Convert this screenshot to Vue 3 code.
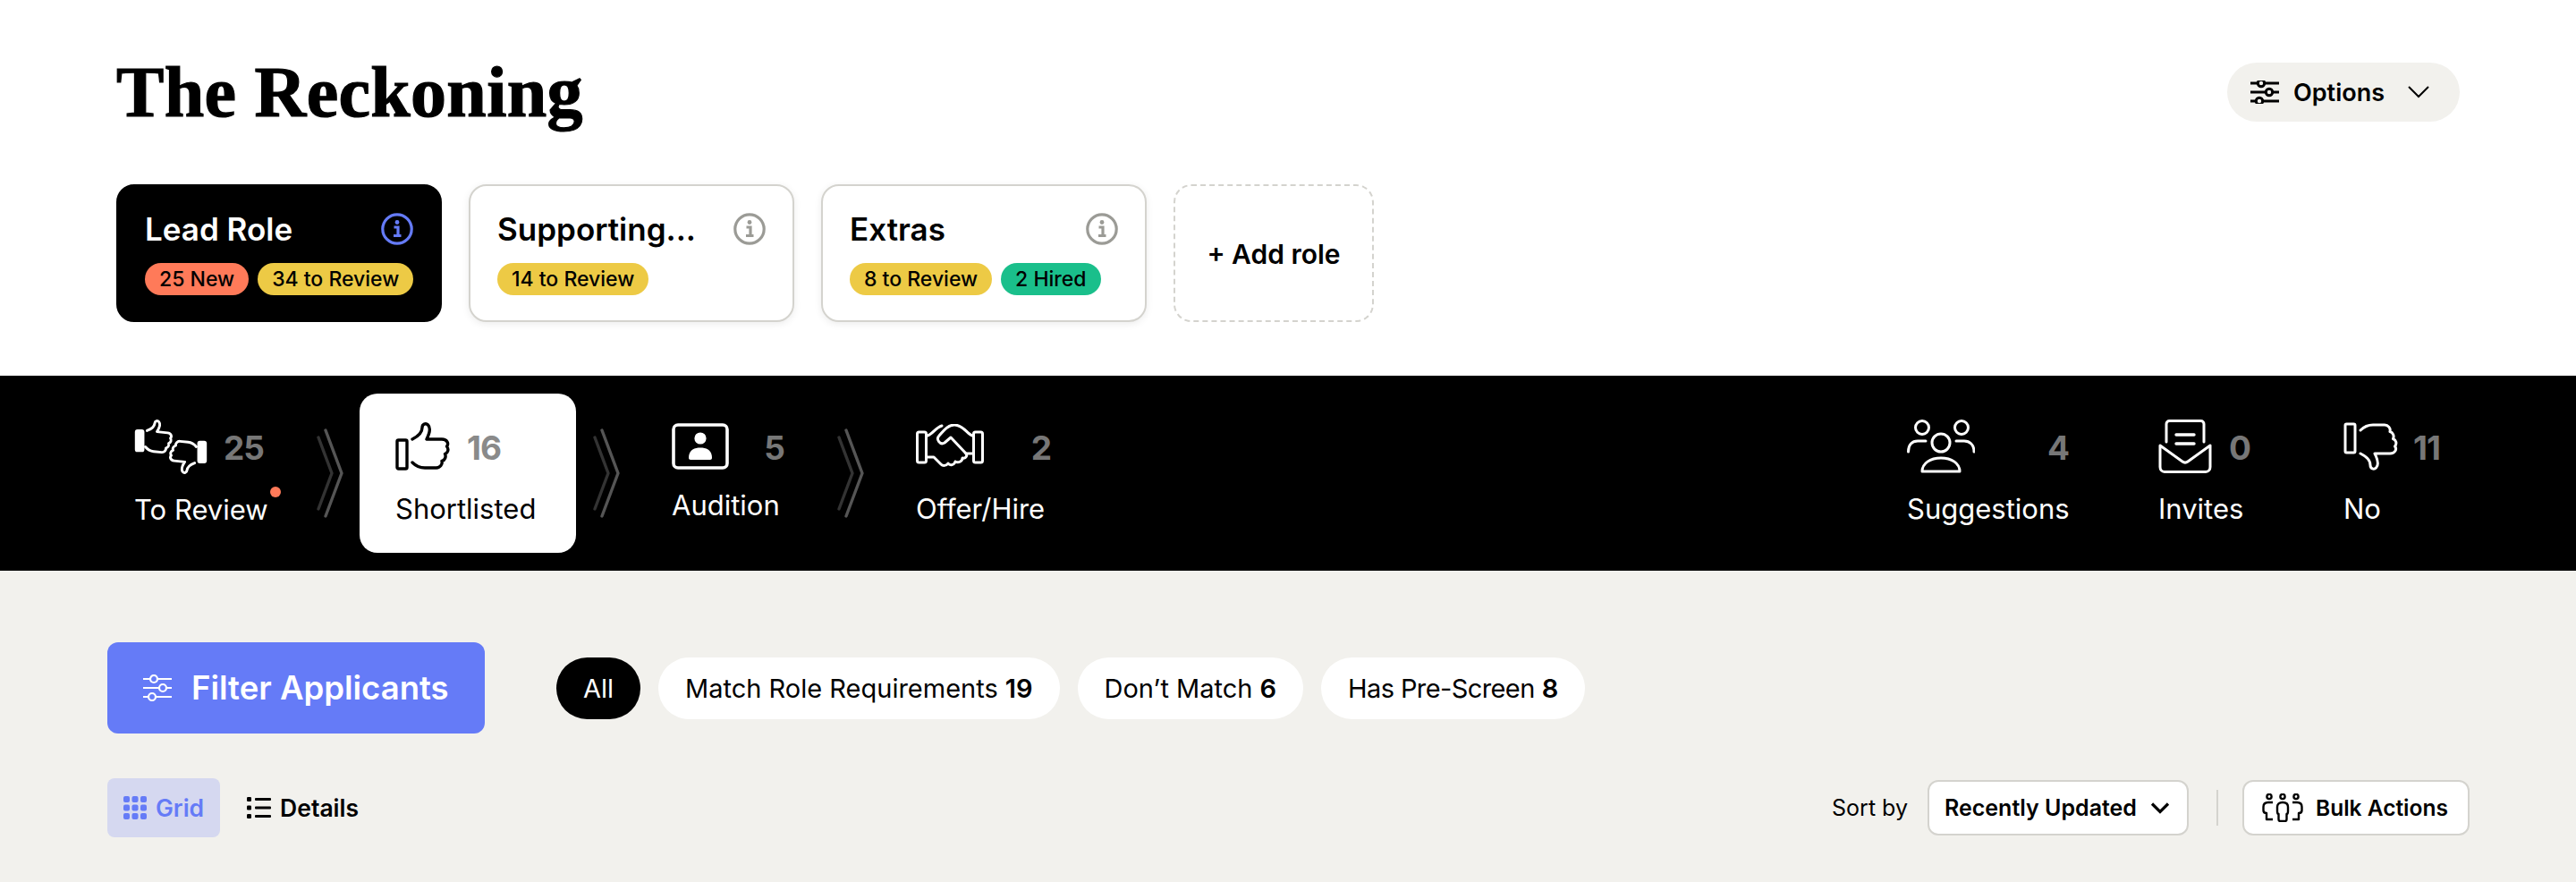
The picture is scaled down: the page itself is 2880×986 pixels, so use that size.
<script setup>
import { ref } from 'vue';

const thumb = 'M19 19 C25 16 30 11 30 6 C30 2 34 0.5 36.5 3 C39.5 6 38 13 35 19 L52 19 C58 19 60 24 57.5 27 C60 30 59 34 55.5 35.5 C57 38.5 55.5 42.5 52 43.5 C53 47 50 51 46 51 L33 51 C27 51 23 49 19 45';

const roles = [
  { name: 'Lead Role', dark: true, tags: [{ text: '25 New', color: 'orange' }, { text: '34 to Review', color: 'yellow' }] },
  { name: 'Supporting...', tags: [{ text: '14 to Review', color: 'yellow' }] },
  { name: 'Extras', tags: [{ text: '8 to Review', color: 'yellow' }, { text: '2 Hired', color: 'green' }] }
];

const pipeline = [
  { label: 'To Review', count: 25, icon: 'review', width: 145, dot: true },
  { label: 'Shortlisted', count: 16, icon: 'up', width: 162, active: true },
  { label: 'Audition', count: 5, icon: 'audition', width: 126 },
  { label: 'Offer/Hire', count: 2, icon: 'hire', width: 151 }
];

const others = [
  { label: 'Suggestions', count: 4, icon: 'people', width: 181 },
  { label: 'Invites', count: 0, icon: 'invite', width: 103 },
  { label: 'No', count: 11, icon: 'down', width: 108 }
];

const chips = [
  { label: 'Match Role Requirements', count: 19 },
  { label: 'Don’t Match', count: 6 },
  { label: 'Has Pre-Screen', count: 8 }
];

const view = ref('grid');
</script>

<template>
  <div class="page">
    <header class="top">
      <div class="title-row">
        <h1>The Reckoning</h1>
        <button class="options">
          <svg class="sliders" width="32" height="26" viewBox="0 0 32 26" fill="none" stroke="currentColor" stroke-width="3">
            <path d="M0 3H8M16 3H32M0 13H17M25 13H32M0 23H6M14 23H32" />
            <circle cx="12" cy="3" r="3.7" /><circle cx="21" cy="13" r="3.7" /><circle cx="10" cy="23" r="3.7" />
          </svg>
          <span>Options</span>
          <svg class="caret" width="24" height="14" viewBox="0 0 24 14" fill="none" stroke="currentColor" stroke-width="2"><path d="M1 1L12 12L23 1" /></svg>
        </button>
      </div>
      <div class="roles">
        <div v-for="r in roles" :key="r.name" class="role" :class="{ dark: r.dark }">
          <div class="role-head">
            <span class="role-name">{{ r.name }}</span>
            <svg class="info" width="36" height="36" viewBox="0 0 36 36" fill="none">
              <circle cx="18" cy="18" r="16.2" stroke="currentColor" stroke-width="3.2" />
              <circle cx="18" cy="10.5" r="2.4" fill="currentColor" />
              <path d="M14.5 16H19V25M14 25.5H22.5" stroke="currentColor" stroke-width="3.2" />
            </svg>
          </div>
          <div class="tags">
            <span v-for="t in r.tags" :key="t.text" class="tag" :class="t.color">{{ t.text }}</span>
          </div>
        </div>
        <div class="add-role">+ Add role</div>
      </div>
    </header>

    <nav class="band">
      <div class="group">
        <template v-for="(s, i) in pipeline" :key="s.label">
          <div class="stage" :class="[s.icon, { active: s.active }]" :style="{ width: s.width + 'px' }">
            <div class="stage-top">
              <svg v-if="s.icon === 'review'" width="82" height="62" viewBox="0 0 82 64" fill="none" stroke="currentColor" stroke-width="3" stroke-linejoin="round" stroke-linecap="round">
                <rect x="1" y="14" width="8" height="23" rx="1.5" fill="currentColor" />
                <g transform="translate(-1 1) scale(.72) rotate(6 30 30)"><path :d="thumb" stroke-width="4.2" /></g>
                <rect x="73" y="27" width="8" height="23" rx="1.5" fill="currentColor" />
                <g transform="translate(83 64) scale(-.72) rotate(6 30 30)"><path :d="thumb" stroke-width="4.2" /></g>
              </svg>
              <svg v-else-if="s.icon === 'up'" width="62" height="56" viewBox="0 0 62 54" fill="none" stroke="currentColor" stroke-width="3.4" stroke-linejoin="round" stroke-linecap="round">
                <rect x="2" y="20" width="11" height="32" rx="1.5" />
                <path :d="thumb" />
              </svg>
              <svg v-else-if="s.icon === 'audition'" width="64" height="52" viewBox="0 0 64 52" fill="none">
                <rect x="2" y="2" width="60" height="48" rx="5" stroke="currentColor" stroke-width="3.6" />
                <circle cx="32" cy="17" r="6.6" fill="currentColor" />
                <path d="M19 39C19 30 25 27.5 32 27.5C39 27.5 45 30 45 39C45 40 44 41 43 41H21C20 41 19 40 19 39Z" fill="currentColor" />
              </svg>
              <svg v-else width="76" height="50" viewBox="0 0 76 50" fill="none" stroke="currentColor" stroke-width="3" stroke-linejoin="round" stroke-linecap="round">
                <rect x="1.5" y="9" width="10" height="34" rx="2" />
                <rect x="64.5" y="9" width="10" height="34" rx="2" />
                <path d="M13 13C19 11 22 4 29 2" />
                <path d="M63 13C57 11 53 1 43 1C37 1 33 5 26 13C22 17 27 24 32 21L39 15L56 33H64" />
                <path d="M12 37H20L28 45C30 47 34 47 36 44C38 47 43 46 44 42C47 44 52 42 52 38C55 39 58 36 56 33" />
              </svg>
              <span class="count">{{ s.count }}</span>
            </div>
            <div class="stage-label">{{ s.label }}<i v-if="s.dot" class="dot"></i></div>
          </div>
          <svg v-if="i < pipeline.length - 1" class="chevrons" width="30" height="100" viewBox="0 0 30 100" fill="none" stroke-width="3.4" stroke-linecap="round" stroke-linejoin="round">
            <path d="M2 10L17 50L2 90" stroke="#333" />
            <path d="M10 2L28 50L10 98" stroke="#555" />
          </svg>
        </template>
      </div>
      <div class="group others">
        <div v-for="s in others" :key="s.label" class="stage" :style="{ width: s.width + 'px' }">
          <div class="stage-top">
            <svg v-if="s.icon === 'people'" width="76" height="60" viewBox="0 0 76 60" fill="none" stroke="currentColor" stroke-width="3" stroke-linecap="round" stroke-linejoin="round">
              <circle cx="17" cy="9" r="7.5" /><circle cx="61" cy="9" r="7.5" /><circle cx="38" cy="26" r="10" />
              <path d="M1.5 36C1.5 28 6 24 12 24H21M75 36C75 28 70 24 64 24H55" />
              <path d="M17 58C17 49 26 43 38 43C50 43 59 49 59 58Z" />
            </svg>
            <svg v-else-if="s.icon === 'invite'" width="60" height="60" viewBox="0 0 60 60" fill="none" stroke="currentColor" stroke-width="3" stroke-linejoin="round" stroke-linecap="round">
              <path d="M9 25V5C9 3 10.5 1.5 12.5 1.5H47.5C49.5 1.5 51 3 51 5V25" />
              <path d="M20 17H40M20 27H40" stroke-width="3.4" />
              <path d="M2 29L27 47C29 48.5 31 48.5 33 47L58 29V53C58 56 56 58.5 53 58.5H7C4 58.5 2 56 2 53Z" />
            </svg>
            <svg v-else width="62" height="56" viewBox="0 0 62 54" fill="none" stroke="currentColor" stroke-width="3" stroke-linejoin="round" stroke-linecap="round">
              <g transform="matrix(1 0 0 -1 0 54)">
                <rect x="2" y="20" width="11" height="32" rx="1.5" />
                <path :d="thumb" />
              </g>
            </svg>
            <span class="count">{{ s.count }}</span>
          </div>
          <div class="stage-label">{{ s.label }}</div>
        </div>
      </div>
    </nav>

    <section class="filters">
      <div class="filter-row">
        <button class="filter-btn">
          <svg width="32" height="30" viewBox="0 0 32 30" fill="none" stroke="currentColor" stroke-width="2.2">
            <path d="M0 5H8M16 5H32M0 15H18M26 15H32M0 25H6M14 25H32" />
            <circle cx="12" cy="5" r="4" /><circle cx="22" cy="15" r="4" /><circle cx="10" cy="25" r="4" />
          </svg>
          Filter Applicants
        </button>
        <div class="chips">
          <span class="chip on">All</span>
          <span v-for="c in chips" :key="c.label" class="chip">{{ c.label }} <b>{{ c.count }}</b></span>
        </div>
      </div>
      <div class="tool-row">
        <div class="views">
          <button class="view" :class="{ on: view === 'grid' }" @click="view = 'grid'">
            <svg width="26" height="26" viewBox="0 0 26 26" fill="currentColor">
              <rect x="0" y="0" width="7" height="7" rx="2" /><rect x="9.5" y="0" width="7" height="7" rx="2" /><rect x="19" y="0" width="7" height="7" rx="2" />
              <rect x="0" y="9.5" width="7" height="7" rx="2" /><rect x="9.5" y="9.5" width="7" height="7" rx="2" /><rect x="19" y="9.5" width="7" height="7" rx="2" />
              <rect x="0" y="19" width="7" height="7" rx="2" /><rect x="9.5" y="19" width="7" height="7" rx="2" /><rect x="19" y="19" width="7" height="7" rx="2" />
            </svg>
            Grid
          </button>
          <button class="view" :class="{ on: view === 'details' }" @click="view = 'details'">
            <svg width="27" height="24" viewBox="0 0 27 24" fill="currentColor">
              <rect x="0" y="0" width="5" height="5" rx="1.2" /><rect x="0" y="9.5" width="5" height="5" rx="1.2" /><rect x="0" y="19" width="5" height="5" rx="1.2" />
              <rect x="9" y="1" width="18" height="3" rx="1" /><rect x="9" y="10.5" width="18" height="3" rx="1" /><rect x="9" y="20" width="18" height="3" rx="1" />
            </svg>
            Details
          </button>
        </div>
        <div class="tools">
          <span class="sort-label">Sort by</span>
          <button class="box select">
            Recently Updated
            <svg width="22" height="13" viewBox="0 0 22 13" fill="none" stroke="currentColor" stroke-width="3.2"><path d="M2 1.5L11 10.5L20 1.5" /></svg>
          </button>
          <span class="divider"></span>
          <button class="box bulk">
            <svg width="46" height="32" viewBox="0 0 46 32" fill="none" stroke="currentColor" stroke-width="2.4" stroke-linejoin="round">
              <circle cx="8" cy="3.5" r="2.6" /><circle cx="23" cy="3.5" r="2.6" /><circle cx="38" cy="3.5" r="2.6" />
              <path d="M12 10H7C3.5 10 1.5 12 1.5 15V19C1.5 21 3 22 5 22V29H12" />
              <path d="M34 10H39C42.5 10 44.5 12 44.5 15V19C44.5 21 43 22 41 22V29H34" />
              <path d="M17 15C17 12 19 10 23 10C27 10 29 12 29 15V20C29 22 28 23 27.5 23V29C27.5 30 26.5 31 25.5 31H20.5C19.5 31 18.5 30 18.5 29V23C18 23 17 22 17 20Z" />
            </svg>
            Bulk Actions
          </button>
        </div>
      </div>
    </section>
  </div>
</template>

<style>
body {
  background: #f2f1ed;
}
</style>

<style scoped>
.page {
  height: 986px;
  display: flex;
  flex-direction: column;
  overflow: hidden;
  font-family: Inter, "Liberation Sans", sans-serif;
  color: #000;
}

button {
  font: inherit;
  color: inherit;
  border: 0;
  background: none;
  cursor: pointer;
}

.top {
  height: 420px;
  box-sizing: border-box;
  padding: 70px 130px 0;
  background: #fff;
}

.title-row {
  height: 66px;
  display: flex;
  justify-content: space-between;
  align-items: center;
}

h1 {
  margin: 0;
  font-family: "Liberation Serif", serif;
  font-size: 80px;
  font-weight: 700;
  line-height: 66px;
  letter-spacing: 0.3px;
  -webkit-text-stroke: 1.2px #000;
}

.options {
  width: 260px;
  height: 66px;
  padding: 0 34px 0 26px;
  display: flex;
  align-items: center;
  border-radius: 33px;
  background: #f2f1ed;
  font-size: 27px;
  font-weight: 600;
}

.sliders {
  margin-right: 16px;
}

.caret {
  margin-left: auto;
}

.roles {
  margin-top: 70px;
  display: flex;
  gap: 30px;
}

.role {
  width: 364px;
  height: 154px;
  box-sizing: border-box;
  padding: 26px 30px 0;
  border: 2px solid #d4d3ce;
  border-radius: 20px;
  background: #fff;
  box-shadow: 0 2px 8px rgba(0, 0, 0, 0.08);
}

.role.dark {
  border-color: #000;
  background: #000;
  color: #fff;
  box-shadow: none;
}

.role-head {
  height: 44px;
  display: flex;
  justify-content: space-between;
  align-items: center;
}

.role-name {
  font-size: 35px;
  font-weight: 600;
}

.info {
  color: #9b9b96;
}

.dark .info {
  color: #657bf7;
}

.tags {
  margin-top: 16px;
  display: flex;
  gap: 10px;
}

.tag {
  height: 36px;
  padding: 0 16px;
  display: flex;
  align-items: center;
  border-radius: 18px;
  color: #000;
  font-size: 23px;
  font-weight: 500;
  white-space: nowrap;
}

.orange {
  background: #ff7a59;
}

.yellow {
  background: #edca45;
}

.green {
  background: #1abf8b;
}

.add-role {
  width: 224px;
  height: 154px;
  box-sizing: border-box;
  padding-top: 2px;
  display: flex;
  align-items: center;
  justify-content: center;
  border: 2px dashed #d4d3ce;
  border-radius: 20px;
  font-size: 30px;
  font-weight: 600;
}

.band {
  height: 218px;
  box-sizing: border-box;
  padding: 0 112px 0 110px;
  display: flex;
  justify-content: space-between;
  align-items: center;
  background: #000;
  color: #fff;
}

.group {
  display: flex;
  align-items: center;
}

.others {
  gap: 24px;
}

.others .stage:first-child {
  margin-right: -4px;
}

.stage {
  height: 178px;
  box-sizing: content-box;
  padding: 0 40px;
  display: flex;
  flex-direction: column;
  justify-content: center;
  border-radius: 20px;
}

.stage.active {
  background: #fff;
  color: #000;
}

.stage-top {
  min-height: 60px;
  display: flex;
  justify-content: space-between;
  align-items: center;
}

.audition .stage-top {
  min-height: 52px;
}

.active .stage-top {
  justify-content: flex-start;
  gap: 18px;
}

.count {
  margin-top: 3px;
  color: #777;
  font-size: 37px;
  font-weight: 700;
  letter-spacing: -1px;
}

.active .count {
  color: #8a8a8a;
}

.stage-label {
  position: relative;
  margin-top: 20px;
  font-size: 31px;
  line-height: 40px;
  white-space: nowrap;
}

.dot {
  position: absolute;
  top: -6px;
  right: -19px;
  width: 12px;
  height: 12px;
  border-radius: 50%;
  background: #ff7a59;
}

.chevrons {
  margin: 0 18px 0 19px;
  flex: none;
}

.filters {
  flex: 1;
  padding: 80px 119px 0 120px;
  background: #f2f1ed;
}

.filter-row {
  display: flex;
  align-items: center;
  gap: 80px;
}

.filter-btn {
  width: 422px;
  height: 102px;
  padding-left: 40px;
  display: flex;
  align-items: center;
  gap: 22px;
  border-radius: 12px;
  background: #657bf7;
  color: #fff;
  font-size: 36.5px;
  font-weight: 600;
}

.chips {
  display: flex;
  gap: 20px;
}

.chip {
  height: 69px;
  padding: 0 30px;
  display: flex;
  align-items: center;
  gap: 8px;
  border-radius: 35px;
  background: #fff;
  font-size: 29px;
}

.chip:last-child {
  letter-spacing: -0.6px;
}

.chip b {
  font-weight: 600;
}

.chip.on {
  background: #000;
  color: #fff;
}

.tool-row {
  margin-top: 50px;
  display: flex;
  justify-content: space-between;
  align-items: center;
}

.views {
  display: flex;
  gap: 12px;
}

.view {
  height: 66px;
  padding: 0 18px;
  display: flex;
  align-items: center;
  gap: 10px;
  border-radius: 8px;
  font-size: 26.5px;
  font-weight: 600;
}

.view.on {
  background: #d5d8f0;
  color: #657bf7;
}

.tools {
  display: flex;
  align-items: center;
}

.sort-label {
  margin-right: 22px;
  font-size: 25px;
}

.box {
  height: 62px;
  display: flex;
  align-items: center;
  border: 2px solid #d4d3ce;
  border-radius: 12px;
  background: #fff;
  font-size: 25px;
  font-weight: 600;
  white-space: nowrap;
}

.select {
  width: 292px;
  padding: 0 19px 0 17px;
  justify-content: space-between;
}

.divider {
  width: 2px;
  height: 40px;
  margin: 0 27px 0 31px;
  background: #d4d3ce;
}

.bulk {
  width: 254px;
  padding: 0 16px 0 20px;
  gap: 14px;
  font-size: 24.5px;
}
</style>
